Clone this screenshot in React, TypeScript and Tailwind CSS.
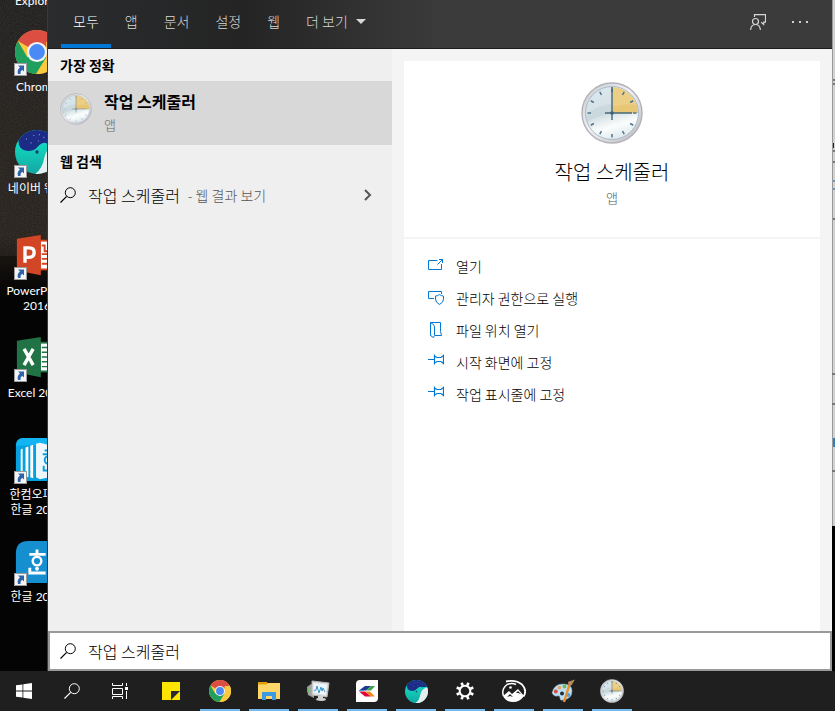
import { useId, useState } from 'react'

type TabId = 'all' | 'apps' | 'docs' | 'settings' | 'web'

const TABS: { id: TabId; label: string }[] = [
    { id: 'all', label: '모두' },
    { id: 'apps', label: '앱' },
    { id: 'docs', label: '문서' },
    { id: 'settings', label: '설정' },
    { id: 'web', label: '웹' },
]

function ClockIcon({ className, small = false }: { className: string; small?: boolean }) {
    const id = useId()
    return (
        <svg viewBox="0 0 62 62" className={className} aria-hidden="true">
            <defs>
                <linearGradient id={`${id}rim`} x1="0" y1="0" x2="1" y2="1">
                    <stop offset="0" stopColor="#c3c6cb" />
                    <stop offset="0.45" stopColor="#f3f1f4" />
                    <stop offset="1" stopColor="#b9b6bc" />
                </linearGradient>
                <linearGradient id={`${id}face`} x1="0.3" y1="0" x2="0.6" y2="1">
                    <stop offset="0" stopColor="#dbe8ef" />
                    <stop offset="0.5" stopColor="#d3dfe3" />
                    <stop offset="0.75" stopColor="#fbfdfd" />
                    <stop offset="1" stopColor="#dce9ec" />
                </linearGradient>
            </defs>
            <circle cx="31" cy="31" r="30" fill={`url(#${id}rim)`} stroke="#b2b2b8" strokeWidth="1.4" />
            <circle cx="31" cy="31" r="26.5" fill={`url(#${id}face)`} stroke="#a9bccd" strokeWidth="1" />
            <path d="M31 31V5a26 26 0 0 1 26 26z" fill="#eccf86" />
            <path d="M31 25q14-4 25-2l1 8H31z" fill="#e4bf6c" opacity="0.6" />
            <path d="M5 34q10-11 26-12v9q-13 2-25 9z" fill="#bdd0d5" opacity="0.45" />
            <g stroke="#4f7388" strokeWidth="1.5" opacity={small ? 0.4 : 1}>
                {Array.from({ length: 12 }, (_, i) => (
                    <path key={i} d="M31 6.500v3.500" transform={`rotate(${i * 30} 31 31)`} />
                ))}
            </g>
            <g opacity={small ? 0.6 : 1}>
                <path d="M31 5v33M24 31h27" stroke="#46687b" strokeWidth="1.4" fill="none" />
                <circle cx="31" cy="31" r="1.8" fill="#3c5f73" />
            </g>
        </svg>
    )
}

function ChromeIcon({ className }: { className: string }) {
    return (
        <svg viewBox="0 0 48 48" className={className} aria-hidden="true">
            <circle cx="24" cy="24" r="24" fill="#fbc940" />
            <path d="M24 24 3.200 12A24 24 0 0 1 44.800 12z" fill="#dc4e41" />
            <path d="M3.200 12A24 24 0 0 0 23 48l11-18-10-6-10.400 6z" fill="#1fa05f" />
            <path d="M44.800 12A24 24 0 0 1 23 48l11.400-18L34 13z" fill="#fbc940" />
            <path d="M24 12h20.800" stroke="#dc4e41" strokeWidth="2" />
            <circle cx="24" cy="24" r="11" fill="#f3f3f3" />
            <circle cx="24" cy="24" r="8.600" fill="#4a8af4" />
        </svg>
    )
}

function WhaleIcon({ className }: { className: string }) {
    const id = useId()
    return (
        <svg viewBox="0 0 48 48" className={className} aria-hidden="true">
            <defs>
                <linearGradient id={`${id}b`} x1="0" y1="0" x2="0" y2="1">
                    <stop offset="0.300" stopColor="#12d8bd" />
                    <stop offset="1" stopColor="#13a7a4" />
                </linearGradient>
                <clipPath id={`${id}c`}>
                    <circle cx="24" cy="24" r="24" />
                </clipPath>
            </defs>
            <g clipPath={`url(#${id}c)`}>
                <rect width="48" height="48" fill={`url(#${id}b)`} />
                <path d="M4 8q-2 14 10 15 7 0 11-5 6-6 10-3l13-1V0H4z" fill="#1c2c86" />
                <path d="M48 15q-13 2-16 15-2 12-10 18h26z" fill="#e4efee" />
                <path d="M12 10h1M20 6h1M26 5h1M25 12h1M31 8h1M17 14h1M36 10h1" stroke="#8ea2e8" strokeWidth="1.300" />
            </g>
            <circle cx="24" cy="24" r="1.800" fill="#163d6e" />
        </svg>
    )
}

function OfficeIcon({ kind }: { kind: 'ppt' | 'excel' }) {
    const ppt = kind === 'ppt'
    return (
        <svg viewBox="0 0 48 48" className="size-12" aria-hidden="true">
            <rect x="26" y="7" width="20" height="32" fill={ppt ? '#d24625' : '#217346'} />
            <rect x="28" y="9" width="17" height="28" fill="#fff" />
            {ppt ? (
                <path d="M29 13h3v6h6M29 22h14M29 27h14M29 32h14" stroke="#d24625" strokeWidth="2" fill="none" />
            ) : (
                <path d="M29 13h14M29 18h14M29 23h14M29 28h14M29 33h14" stroke="#217346" strokeWidth="1.500" />
            )}
            <path d="M3 6 28 2v42L3 39z" fill={ppt ? '#d24625' : '#217346'} />
            {ppt ? (
                <path d="M11.500 31V15.500H16q5 0 5 4.800T16 25.500h-4.500" stroke="#fff" strokeWidth="3.500" fill="none" />
            ) : (
                <path d="M10.500 14.500 20 31.500M20 14.500 10.500 31.500" stroke="#fff" strokeWidth="3.500" />
            )}
        </svg>
    )
}

function HancomIcon() {
    return (
        <svg viewBox="0 0 48 48" className="size-12" aria-hidden="true">
            <rect x="2" y="1" width="46" height="45" rx="8" fill="#06a0de" />
            <path d="M2 9q0-8 8-8h38v7z" fill="#12b4f2" />
            <path d="M7 13l2-1v28l-2-1zM12 11l3-1v32l-3-1zM17 9l3-1v35l-3-1z" fill="#fff" />
            <path d="M23 7l4-1 21 5v29l-21 4-4-2z" fill="#eef8fc" />
            <path d="M32 14h10M30 18h12" stroke="#06a0de" strokeWidth="2" />
            <circle cx="36" cy="24" r="4" fill="none" stroke="#06a0de" strokeWidth="2" />
            <path d="M31 30v5h12" stroke="#06a0de" strokeWidth="2" fill="none" />
        </svg>
    )
}

function HangulIcon() {
    return (
        <svg viewBox="0 0 48 48" className="size-12" aria-hidden="true">
            <path d="M2 15Q2 2 15 2h33v44H2z" fill="#168fd0" />
            <path d="M24 11v4M16 16h17" stroke="#fff" strokeWidth="3" />
            <circle cx="24" cy="23" r="4.500" fill="none" stroke="#fff" strokeWidth="2.500" />
            <circle cx="24" cy="31" r="2" fill="#fff" />
            <path d="M16.500 30v5.500H33M36 11v20M36 21h4" stroke="#fff" strokeWidth="3" fill="none" />
        </svg>
    )
}

function ShortcutArrow() {
    return (
        <svg viewBox="0 0 13 13" className="absolute bottom-0 left-0 size-[13px]" aria-hidden="true">
            <rect x="0.500" y="0.500" width="12" height="12" fill="#f4f4f4" stroke="#9a9a9a" />
            <path d="M4 2.500h6v6L8.200 6.800Q6 8 6.500 11H4Q2.600 7 6 4.500z" fill="#2c62ab" />
        </svg>
    )
}

function SearchIcon({ className }: { className: string }) {
    return (
        <svg viewBox="0 0 16 16" fill="none" stroke="currentColor" className={className} aria-hidden="true">
            <circle cx="10.300" cy="5.700" r="5" />
            <path d="M6.700 9.300.5 15.500" strokeWidth="1.200" />
        </svg>
    )
}

const DESKTOP: { label: string; icon: React.ReactNode }[] = [
    { label: 'Chrome', icon: <ChromeIcon className="mt-0.5 size-11" /> },
    { label: '네이버 웨일', icon: <WhaleIcon className="size-11" /> },
    { label: 'PowerPoint 2016', icon: <OfficeIcon kind="ppt" /> },
    { label: 'Excel 2016', icon: <OfficeIcon kind="excel" /> },
    { label: '한컴오피스 한글 2020', icon: <HancomIcon /> },
    { label: '한글 2020', icon: <HangulIcon /> },
]

const line = { viewBox: '0 0 16 16', fill: 'none', stroke: '#0078d7', className: 'size-4 shrink-0', 'aria-hidden': true } as const

const PinIcon = () => (
    <svg {...line}>
        <path d="M0 5.500h6M6.500.5v10M6.500 2 9 3.500h4L15.500 1.500v8L13 7.500H9L6.500 9" strokeWidth="1.200" />
    </svg>
)

const ACTIONS: { label: string; icon: React.ReactNode }[] = [
    {
        label: '열기',
        icon: (
            <svg {...line}>
                <path d="M9.500 2.500h-9v9h13V6M9.500 6.500l5-5M11 1.500h3.500V5" />
            </svg>
        ),
    },
    {
        label: '관리자 권한으로 실행',
        icon: (
            <svg {...line}>
                <path d="M6 8.500H.5v-7h13V4M11.500 4.500q2 1.500 4 1.500v3q0 3.500-4 5.500-4-2-4-5.500V6q2 0 4-1.500z" />
            </svg>
        ),
    },
    {
        label: '파일 위치 열기',
        icon: (
            <svg {...line}>
                <path d="M2.500 13.500V.5h10v9l1 4H7M2.500.5Q6.500 2 6.500 5v8.500l-1 2q-3-1-3-3" />
            </svg>
        ),
    },
    { label: '시작 화면에 고정', icon: <PinIcon /> },
    { label: '작업 표시줄에 고정', icon: <PinIcon /> },
]

const TASKS: { label: string; running: boolean; icon: React.ReactNode }[] = [
    {
        label: '스티커 메모',
        running: false,
        icon: (
            <svg viewBox="0 0 18 18" className="size-[18px]" aria-hidden="true">
                <path d="M0 0h18v18H0z" fill="#ffe600" />
                <path d="M9 9h9l-9 9z" fill="#2a2a2a" />
            </svg>
        ),
    },
    { label: 'Chrome', running: true, icon: <ChromeIcon className="size-[22px]" /> },
    {
        label: '파일 탐색기',
        running: true,
        icon: (
            <svg viewBox="0 0 22 20" className="h-5 w-[22px]" aria-hidden="true">
                <path d="M0 1h9l1 3H0z" fill="#e3a008" />
                <path d="M0 3.500h8l2-1.500h12v16H0z" fill="#ffd768" />
                <path d="M4 19V11h14v8h-4v-4H8v4z" fill="#3c9be0" />
            </svg>
        ),
    },
    {
        label: '작업 관리자',
        running: true,
        icon: (
            <svg viewBox="0 0 24 22" className="h-[22px] w-6" aria-hidden="true">
                <path d="M1 7 5 4l3 2v12l-6-3z" fill="#9fa3a3" />
                <path d="M2 8.500v4" stroke="#62c94f" strokeWidth="1.500" />
                <path d="M6 1l17 2-2 14-15-2z" fill="#d9dcdb" stroke="#b6b8b8" />
                <path d="M7.500 3 21 4.500l-1.400 10.500L7.500 13z" fill="#eef6fb" />
                <path d="M8 11l2-1 1-4 2 7 2-6 1 4 1-3 2 4" stroke="#3994c9" fill="none" />
                <path d="M12 16h5v2q3 0 3 2-4 2-10 0 0-2 2-2z" fill="#d0d2d2" />
            </svg>
        ),
    },
    {
        label: '캡처 도구',
        running: true,
        icon: (
            <svg viewBox="0 0 22 22" className="size-[22px]" aria-hidden="true">
                <path d="M4 0h18v18q0 4-4 4H0V4q0-4 4-4z" fill="#fff" />
                <path d="M3 10.500 9 6h6l-5 4.500z" fill="#203a90" />
                <path d="M10 10.500 15 6h4l-4 4.500z" fill="#3aa24c" />
                <path d="M3 11.500h6l6 5H9z" fill="#e4003b" />
                <path d="M9 11.500h5l5 5h-4z" fill="#f08a1d" />
                <path d="M3 10.500h5" stroke="#2e9fd8" />
            </svg>
        ),
    },
    { label: '네이버 웨일', running: true, icon: <WhaleIcon className="size-[23px]" /> },
    {
        label: '설정',
        running: true,
        icon: (
            <svg viewBox="0 0 18 18" className="size-[18px]" fill="none" stroke="#fff" aria-hidden="true">
                <circle cx="9" cy="9" r="5.300" strokeWidth="2" />
                {Array.from({ length: 8 }, (_, i) => (
                    <path key={i} d="M9 0v3.200" strokeWidth="2.600" transform={`rotate(${i * 45 + 22.5} 9 9)`} />
                ))}
            </svg>
        ),
    },
    {
        label: '사진',
        running: true,
        icon: (
            <svg viewBox="0 0 24 22" className="h-[22px] w-6" aria-hidden="true">
                <path d="M4 1.500Q14-.5 20 4.500q5.500 6 1.500 12" fill="none" stroke="#fff" strokeWidth="1.800" />
                <path d="M5 4.500q-6 5-3.500 11.500M5 4.500q5-2 9 0" fill="none" stroke="#fff" strokeWidth="1.500" />
                <path d="M1 16 7 11l3 3 6-5 6 7q-4 6-11 6T1 16z" fill="#fff" />
                <path d="M5 17l3-3 3 3-3-1zM14 13l2-2 3 3-3-1z" fill="#222" />
                <circle cx="8.500" cy="7.500" r="1.300" fill="#fff" />
            </svg>
        ),
    },
    {
        label: '그림판',
        running: true,
        icon: (
            <svg viewBox="0 0 24 24" className="size-6" aria-hidden="true">
                <path d="M1 14Q3 5 12 5q9 0 9 7 0 8-9 9-3 1-3-2t-3-2-5-3z" fill="#bcdff2" stroke="#86b5d2" strokeWidth="0.500" />
                <circle cx="4.800" cy="12.500" r="1.900" fill="#e0493e" />
                <circle cx="8.500" cy="8.800" r="1.800" fill="#f0a05a" />
                <circle cx="13.500" cy="7.500" r="1.900" fill="#6cc04a" />
                <circle cx="11" cy="14.500" r="2" fill="#1f2e3a" />
                <circle cx="17.500" cy="16" r="1.900" fill="#4f9fdd" />
                <path d="M18.500 5.500 13 23" stroke="#ea8d2c" strokeWidth="2.400" />
                <path d="M18 6.500q-2-4 0-4l6-2-3 5q-1 2-3 1z" fill="#b98b58" />
            </svg>
        ),
    },
    { label: '작업 스케줄러', running: true, icon: <ClockIcon className="size-6" /> },
]

function Desktop() {
    return (
        <div className="relative w-12 shrink-0 overflow-hidden border-r border-[#3a3a3a] bg-linear-to-b from-[#1c1b1a] from-0% via-[#231d17] via-35% to-[#040404] to-45%">
            <svg className="absolute inset-x-0 top-0 h-64 w-full opacity-15" aria-hidden="true">
                <filter id="grain">
                    <feTurbulence type="fractalNoise" baseFrequency="0.9" numOctaves="2" />
                    <feColorMatrix type="saturate" values="0" />
                </filter>
                <rect width="100%" height="100%" filter="url(#grain)" />
            </svg>
            <div className="relative w-[74px] text-center text-xs leading-[15px] text-white">
                <div className="mb-5 flex h-2 items-end justify-center overflow-hidden">Explorer</div>
                {DESKTOP.map(item => (
                    <a key={item.label} href="#" className="block h-[102px] px-1">
                        <span className="relative mx-auto flex h-12 w-[46px] items-start justify-center">
                            {item.icon}
                            <ShortcutArrow />
                        </span>
                        <span className="mt-[3px] block">{item.label}</span>
                    </a>
                ))}
            </div>
        </div>
    )
}

// Edge of the window that sits behind the search flyout
function WindowEdge() {
    return (
        <div className="w-[3px] shrink-0 bg-black">
            <svg viewBox="0 0 3 526" className="block h-[526px] w-[3px]" aria-hidden="true">
                <rect width="3" height="526" fill="#d2d2d2" />
                <rect width="1" height="526" fill="#999" />
                <path d="M1 80h2M1 84h2M1 151h2M1 162h2M1 219h2M1.500 143v5" stroke="#222" />
                <path d="M1 181h2M1 189h2" stroke="#0067c0" />
                <path d="M0 374h3M0 404h3M0 471h3" stroke="#777" strokeWidth="2" />
                <rect x="1" y="438" width="2" height="9" fill="#2b7fc4" />
            </svg>
        </div>
    )
}

export default function App() {
    const [activeTab, setActiveTab] = useState<TabId>('all')
    const [query, setQuery] = useState('작업 스케줄러')

    return (
        <div className="flex min-h-screen flex-col font-['Lato','Noto_Sans_CJK_KR',sans-serif]">
            <div className="flex flex-1">
                <Desktop />

                <main className="flex min-w-0 flex-1 flex-col bg-[#efefef] font-['Noto_Sans_CJK_KR',sans-serif] font-light text-black">
                    <header className="flex h-[49px] items-stretch border-b border-[#1c1c1c] bg-linear-to-r from-[#2a2c2e] via-[#242424] via-25% to-[#3b3b3b] to-50% pr-4 pl-[13px] text-sm text-[#d8d8d8]">
                        <nav className="flex gap-0.5">
                            {TABS.map(tab => (
                                <button
                                    key={tab.id}
                                    onClick={() => setActiveTab(tab.id)}
                                    className={`border-b-4 px-3 pb-0.5 ${activeTab === tab.id ? 'border-[#0078d7] text-white' : 'border-transparent'}`}
                                >
                                    {tab.label}
                                </button>
                            ))}
                            <button className="flex items-center gap-2 border-b-4 border-transparent px-3 pb-0.5">
                                더 보기
                                <svg viewBox="0 0 10 5" className="h-[5px] w-2.5" aria-hidden="true">
                                    <path d="M0 0h10L5 5z" fill="#d8d8d8" />
                                </svg>
                            </button>
                        </nav>
                        <div className="ml-auto flex items-center gap-2.5 pb-1">
                            <button aria-label="피드백" className="flex size-8 items-center justify-center">
                                <svg viewBox="0 0 16 16" className="size-4" fill="none" stroke="#d6d6d6" strokeWidth="1.200" aria-hidden="true">
                                    <path d="M4.500 3V.6h11v7.600h-1.800v2.300l-2.500-2.300" />
                                    <circle cx="5.500" cy="7.500" r="3" />
                                    <path d="M.6 16q.4-5.500 4.900-5.500t4.900 5.500" />
                                </svg>
                            </button>
                            <button aria-label="옵션" className="flex w-8 items-center justify-center gap-[5px]">
                                <span className="size-0.5 bg-[#d2d2d2]" />
                                <span className="size-0.5 bg-[#d2d2d2]" />
                                <span className="size-0.5 bg-[#d2d2d2]" />
                            </button>
                        </div>
                    </header>

                    <div className="flex flex-1">
                        {/* Results */}
                        <section className="w-[344px] shrink-0">
                            <h2 className="px-3 text-sm leading-8 font-bold">가장 정확</h2>
                            <button className="flex h-16 w-full items-start gap-3 bg-[#d8d8d8] px-3 pt-2 text-left">
                                <ClockIcon className="mt-1 size-8" small />
                                <span>
                                    <span className="block text-base leading-6 font-bold">작업 스케줄러</span>
                                    <span className="block text-[13px] leading-6 text-[#666]">앱</span>
                                </span>
                            </button>
                            <h2 className="px-3 text-sm leading-8 font-bold">웹 검색</h2>
                            <button className="flex h-9 w-full items-center px-3 text-left">
                                <SearchIcon className="mr-3 size-4" />
                                <span className="text-base">작업 스케줄러</span>
                                <span className="ml-2 text-sm text-[#555]">- 웹 결과 보기</span>
                                <svg viewBox="0 0 8 12" className="mr-2 ml-auto h-3 w-2" aria-hidden="true">
                                    <path d="M1 1l5 5-5 5" fill="none" stroke="#555" strokeWidth="2" />
                                </svg>
                            </button>
                        </section>

                        {/* Preview */}
                        <section className="flex min-w-0 flex-1 flex-col gap-0.5 bg-[#f4f4f4] px-3 pt-3">
                            <div className="flex h-44 flex-col items-center bg-white pt-[21px]">
                                <ClockIcon className="size-[62px]" />
                                <h1 className="mt-3 text-xl leading-8">작업 스케줄러</h1>
                                <p className="text-[13px] leading-5 text-[#555]">앱</p>
                            </div>
                            <ul className="flex-1 bg-white px-6 pt-[11px]">
                                {ACTIONS.map(action => (
                                    <li key={action.label}>
                                        <button className="flex h-8 w-full items-center gap-3 text-left text-sm">
                                            {action.icon}
                                            {action.label}
                                        </button>
                                    </li>
                                ))}
                            </ul>
                        </section>
                    </div>

                    <label className="flex h-10 items-center gap-3 border-2 border-[#999] bg-white px-2.5">
                        <SearchIcon className="size-4" />
                        <input
                            type="text"
                            aria-label="검색"
                            value={query}
                            onChange={e => setQuery(e.target.value)}
                            className="min-w-0 flex-1 bg-transparent text-base outline-none"
                        />
                    </label>
                </main>

                <WindowEdge />
            </div>

            <footer className="flex h-10 bg-[#1f1f1f] text-white">
                <button aria-label="시작" className="flex w-12 items-center justify-center">
                    <svg viewBox="0 0 16 16" className="size-4" fill="#fff" aria-hidden="true">
                        <path d="M0 2.300 6.500 1.400v6.200H0zM7.300 1.300 16 0v7.600H7.300zM0 8.400h6.500v6.200L0 13.700zM7.300 8.400H16V16l-8.700-1.300z" />
                    </svg>
                </button>
                <button aria-label="검색" className="flex w-12 items-center justify-center">
                    <SearchIcon className="size-4" />
                </button>
                <button aria-label="작업 보기" className="flex w-12 items-center justify-center">
                    <svg viewBox="0 0 16 16" className="size-4" fill="none" stroke="#fff" aria-hidden="true">
                        <path d="M.5 0v2.500h10V0M.5 5.500h10v6H.5zM.5 16v-2.500h10V16M14.500 0v3M14.500 8v8" />
                        <path d="M13 4h3v3h-3z" fill="#fff" stroke="none" />
                    </svg>
                </button>
                <div className="ml-[3px] flex gap-px">
                    {TASKS.map(task => (
                        <button
                            key={task.label}
                            aria-label={task.label}
                            className="flex w-12 flex-col items-center"
                        >
                            <span className="flex flex-1 items-center">{task.icon}</span>
                            <span className={`-mt-0.5 h-0.5 w-10 ${task.running ? 'bg-[#76b9ed]' : ''}`} />
                        </button>
                    ))}
                </div>
            </footer>
        </div>
    )
}
